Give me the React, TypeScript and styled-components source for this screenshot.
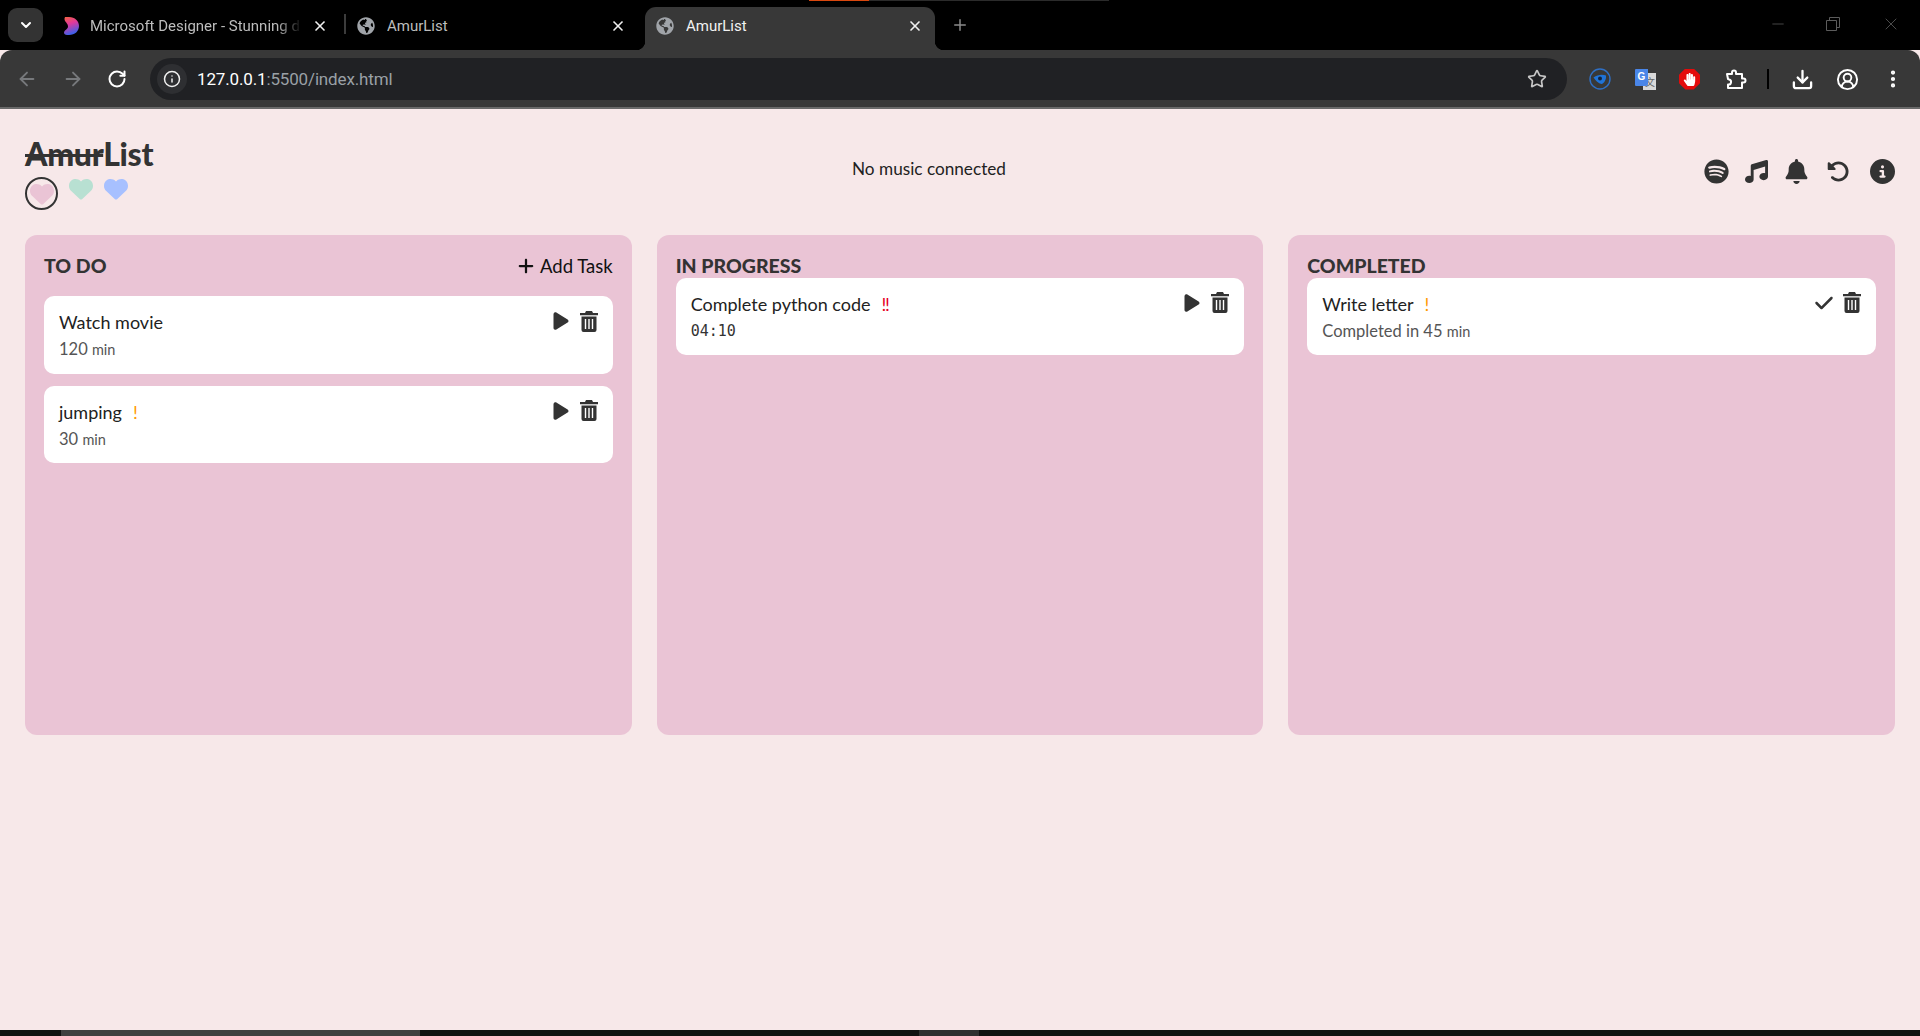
import React from "react";
import styled, { createGlobalStyle } from "styled-components";
import { ArrowLeft, ArrowRight, RotateCw, Info, Star, Download, CircleUserRound, EllipsisVertical, X, Plus, Minus, ChevronDown } from "lucide-react";
import { FaGlobeAmericas, FaHandPaper } from "react-icons/fa";
import { FaSpotify, FaMusic, FaBell, FaRotateLeft, FaCircleInfo, FaPlay, FaCheck, FaPlus, FaHeart } from "react-icons/fa6";

const Global = createGlobalStyle`
  html, body { margin: 0; padding: 0; background: #f7e8e9; }
  * { box-sizing: border-box; }
`;

const Shell = styled.div`
  height: 100vh; display: flex; flex-direction: column; overflow: hidden;
  font-family: "Lato", "Noto Sans", sans-serif; color: #333;
`;
const TabStrip = styled.div`
  position: relative; height: 50px; background: #000; display: flex; align-items: flex-end; padding-left: 8px; flex: none;
`;
const LoadLine = styled.div`
  position: absolute; top: 0; left: 809px; width: 300px; height: 1px; background: #2b2b2b;
  &::before { content: ""; display: block; width: 60px; height: 1px; background: #d9480f; }
`;
const TabSearch = styled.div`
  width: 35px; height: 34px; margin-bottom: 8px; border-radius: 9px; background: #333; color: #fff;
  display: flex; align-items: center; justify-content: center; flex: none;
`;
const Tab = styled.div<{ $w: number; $pl: number; $active?: boolean; $gap?: number; $pr?: number }>`
  position: relative; width: ${p => p.$w}px; height: 43px; flex: none;
  display: flex; align-items: flex-start; gap: ${p => p.$gap ?? 12}px; padding: 10px ${p => p.$pr ?? 19}px 0 ${p => p.$pl}px;
  background: ${p => (p.$active ? "#383838" : "transparent")}; border-radius: 11px 11px 0 0;
  font: 15px "Roboto", "Liberation Sans", sans-serif; color: ${p => (p.$active ? "#f2f2f2" : "#bdbdbd")};
`;
const TabSep = styled.span`
  position: absolute; left: 0; top: 7px; width: 2px; height: 20px; background: #3c3c3c;
`;
const FlareLeft = styled.span`
  position: absolute; left: -9px; bottom: 0; width: 9px; height: 9px; background: radial-gradient(circle at 0 0, transparent 9px, #383838 9.5px);
`;
const FlareRight = styled.span`
  position: absolute; right: -9px; bottom: 0; width: 9px; height: 9px; background: radial-gradient(circle at 100% 0, transparent 9px, #383838 9.5px);
`;
const TabTitle = styled.span<{ $fade?: boolean }>`
  flex: 1; min-width: 0; white-space: nowrap; overflow: hidden; line-height: 18px;
  ${p => p.$fade && "-webkit-mask-image: linear-gradient(90deg, #000 88%, transparent 100%); mask-image: linear-gradient(90deg, #000 88%, transparent 100%);"}
`;
const TabIcon = styled.span`
  display: flex; width: 18px; height: 18px; align-items: center; justify-content: center; color: #a0a4a9; flex: none;
`;
const TabClose = styled.span`
  display: flex; width: 16px; height: 18px; align-items: center; justify-content: center; color: #f0f0f0; flex: none;
`;
const NewTab = styled.span`
  margin-bottom: 16px; margin-left: 16px; display: flex; color: #8a8a8a;
`;
const WindowControls = styled.div`
  margin-left: auto; margin-bottom: 16px; display: flex; align-items: center; color: #5c5c5c;
`;
const WinBtn = styled.span<{ $ml: number }>`
  display: flex; margin-left: ${p => p.$ml}px;
`;
const Toolbar = styled.div`
  height: 59px; flex: none; background: #383838; border-bottom: 2px solid #696969; border-radius: 12px 12px 0 0;
  display: flex; align-items: center; padding: 1px 0 0;
`;
const NavBtn = styled.span<{ $ml: number; $dim?: boolean }>`
  display: flex; margin-left: ${p => p.$ml}px; color: ${p => (p.$dim ? "#77797c" : "#fff")}; flex: none;
`;
const Omnibox = styled.div`
  width: 1417px; height: 42px; margin-left: 23px; background: #202124; border-radius: 21px; flex: none;
  display: flex; align-items: center; padding: 0 20px 0 7px;
`;
const InfoChip = styled.span`
  width: 30px; height: 30px; border-radius: 50%; background: #2e2f32; color: #f0f0f0; display: flex; align-items: center; justify-content: center; flex: none;
`;
const Url = styled.div`
  margin-left: 10px; flex: 1; font: 17px "Roboto", "Liberation Sans", sans-serif; color: #9aa0a6; letter-spacing: -0.15px;
  b { font-weight: 400; color: #fff; }
`;
const ExtSlot = styled.span<{ $ml: number }>`
  display: flex; margin-left: ${p => p.$ml}px; flex: none; color: #fff;
`;
const ToolSep = styled.span`
  width: 2px; height: 20px; background: #000; margin-left: 20px; flex: none;
`;
const TranslateBox = styled.span`
  position: relative; width: 21px; height: 21px; display: block;
`;
const TranslateBlue = styled.span`
  position: absolute; left: 0; top: 0; width: 13px; height: 17px; background: #4a86e8; border-radius: 1px 0 2px 1px; color: #fff;
  font: bold 10px/15px "Liberation Sans", sans-serif; text-align: center; z-index: 1;
`;
const TranslateGrey = styled.span`
  position: absolute; right: 0; top: 4px; width: 13px; height: 17px; background: #d9d9d9; color: #666;
  font: 10px/17px "Noto Sans CJK SC", sans-serif; text-align: right; padding-right: 1px;
`;
const StopSign = styled.span`
  width: 21px; height: 21px; background: #e40b0b; color: #fff; display: flex; align-items: center; justify-content: center;
  clip-path: polygon(30% 0, 70% 0, 100% 30%, 100% 70%, 70% 100%, 30% 100%, 0 70%, 0 30%);
`;
const Page = styled.main`
  flex: 1; background: #f7e8e9; padding: 21px 25px 0;
  min-height: 0;
`;
const Header = styled.header`
  display: grid; grid-template-columns: 1fr auto 1fr; align-items: start; height: 105px;
`;
const Brand = styled.div`
  display: flex; flex-direction: column; align-items: flex-start;
`;
const Logo = styled.h1`
  margin: 0; font: 900 32px/47px "Lato", sans-serif; color: #333; letter-spacing: -0.3px;
  s { text-decoration-thickness: 3px; }
`;
const Hearts = styled.div`
  display: flex; align-items: flex-start; gap: 11px;
`;
const HeartBtn = styled.span<{ $c: string; $on?: boolean }>`
  width: ${p => (p.$on ? 33 : 24)}px; height: ${p => (p.$on ? 33 : 24)}px; border-radius: 50%; flex: none;
  border: ${p => (p.$on ? "2px solid #333" : "none")}; color: ${p => p.$c};
  display: flex; align-items: center; justify-content: center; margin-top: ${p => (p.$on ? 0 : 0)}px;
`;
const NowPlaying = styled.div`
  margin-top: 28px; font-size: 17.2px; line-height: 22px; color: #222; margin-left: -62px;
`;
const HeaderIcons = styled.div`
  justify-self: end; display: flex; align-items: center; margin-top: 29px; color: #333; height: 25px;
`;
const HeaderIcon = styled.span<{ $ml?: number }>`
  display: flex; margin-left: ${p => p.$ml ?? 0}px;
`;
const Board = styled.section`
  display: grid; grid-template-columns: repeat(3, 1fr); gap: 25px;
`;
const Column = styled.div`
  height: 500px; background: #eac4d5; border-radius: 12px; padding: 17px 19px 0; display: flex; flex-direction: column;
`;
const ColHead = styled.div<{ $tall?: boolean }>`
  display: flex; justify-content: space-between; align-items: flex-start; height: ${p => (p.$tall ? 44 : 25.5)}px; flex: none;
`;
const ColTitle = styled.h2`
  margin: 0; font: 900 19.5px/28px "Lato", sans-serif; color: #333;
`;
const AddTask = styled.button`
  border: 0; background: none; padding: 0; display: flex; align-items: center; gap: 5px; color: #111;
  font: 18.5px/28px "Lato", sans-serif;
`;
const Cards = styled.div`
  display: flex; flex-direction: column; gap: 12px;
`;
const Card = styled.article`
  height: 77.5px; background: #fff; border-radius: 10px; padding: 15px 14px 0 15px; display: flex; justify-content: space-between;
`;
const CardBody = styled.div`
  display: flex; flex-direction: column; gap: 5px;
`;
const CardTitle = styled.div`
  font-size: 18px; line-height: 23px; color: #222; display: flex; gap: 11px;
`;
const Priority = styled.span<{ $c: string }>`
  color: ${p => p.$c};
`;
const CardMeta = styled.div`
  font-size: 16.5px; line-height: 21px; color: #555;
  small { font-size: 14.5px; }
`;
const Timer = styled.div`
  font: 15px/21px "DejaVu Sans Mono", monospace; color: #333;
`;
const CardActions = styled.div`
  display: flex; gap: 8px; color: #333; height: 20px; align-items: center;
`;
const ScrollBar = styled.div`
  height: 6px; background: #111; flex: none; display: flex;
`;
const Thumb = styled.span<{ $ml: number; $w: number; $c: string }>`
  margin-left: ${p => p.$ml}px; width: ${p => p.$w}px; background: ${p => p.$c};
`;

const DesignerLogo = () => (
  <svg width="18" height="18" viewBox="0 0 18 18">
    <defs>
      <linearGradient id="dl" x1="0" y1="0" x2="0.3" y2="1">
        <stop offset="0" stopColor="#f5643f" />
        <stop offset="0.45" stopColor="#e0389c" />
        <stop offset="1" stopColor="#3f5fe8" />
      </linearGradient>
    </defs>
    <path d="M3 0h4c6 0 10 4 10 9s-4 9-10 9H5c-2 0-3-1-3-2.500C2 13 6 12.500 6 9.500 6 6 2.500 5 2.500 2 2.500 1 3 0 3 0z" fill="url(#dl)" />
  </svg>
);

const EyeExt = () => (
  <svg width="22" height="22" viewBox="0 0 22 22">
    <circle cx="11" cy="11" r="10" fill="none" stroke="#2f6fc4" strokeWidth="1.400" />
    <path d="M4.500 9.500c4-3 9-3.500 12.500-2 .5 4-2 8-4.500 8.500-3-.5-6-3.500-8-6.500z" fill="#1f73d8" />
    <circle cx="11" cy="10.500" r="2" fill="#12233d" />
  </svg>
);

const PuzzleExt = () => (
  <svg width="22" height="22" viewBox="0 0 22 22" fill="none" stroke="#fff" strokeWidth="2" strokeLinejoin="round">
    <path d="M2 6h5V4.500a2 2 0 0 1 4 0V6h6v4.500h1.500a2 2 0 0 1 0 4H17V20H3v-3.500a2.500 2.500 0 0 0 1-5 3 3 0 0 0-1-.5z" />
  </svg>
);

const TrashIcon = () => (
  <svg width="20" height="21" viewBox="0 0 20 21" fill="currentColor">
    <path d="M7 0h6l1 2h5v2.200H1V2h5z" />
    <path fillRule="evenodd" d="M2.500 5.500h15V19a2 2 0 0 1-2 2h-11a2 2 0 0 1-2-2zM5.800 8v10h1.400V8zM9.300 8v10h1.400V8zM12.800 8v10h1.400V8z" />
  </svg>
);

type CardData = { title: string; prio?: string; prioColor?: string; meta: React.ReactNode; done?: boolean };

const TaskCard = ({ title, prio, prioColor, meta, done }: CardData) => (
  <Card>
    <CardBody>
      <CardTitle>
        {title}
        {prio && <Priority $c={prioColor ?? "#f90"}>{prio}</Priority>}
      </CardTitle>
      {meta}
    </CardBody>
    <CardActions>
      {done ? <FaCheck size={20} /> : <FaPlay size={20} />}
      <TrashIcon />
    </CardActions>
  </Card>
);

export default function App() {
  return (
    <Shell>
      <Global />
      <TabStrip>
        <LoadLine />
        <TabSearch><ChevronDown size={16} strokeWidth={3} /></TabSearch>
        <Tab $w={301} $pl={19} $pr={16} $gap={10}>
          <TabIcon><DesignerLogo /></TabIcon>
          <TabTitle $fade>Microsoft Designer - Stunning d</TabTitle>
          <TabClose><X size={16} strokeWidth={2.5} /></TabClose>
        </Tab>
        <Tab $w={301} $pl={13}>
          <TabSep />
          <TabIcon><FaGlobeAmericas size={18} /></TabIcon>
          <TabTitle>AmurList</TabTitle>
          <TabClose><X size={16} strokeWidth={2.5} /></TabClose>
        </Tab>
        <Tab $w={290} $pl={11} $pr={12} $active>
          <FlareLeft />
          <FlareRight />
          <TabIcon><FaGlobeAmericas size={18} /></TabIcon>
          <TabTitle>AmurList</TabTitle>
          <TabClose><X size={16} strokeWidth={2.5} /></TabClose>
        </Tab>
        <NewTab><Plus size={18} /></NewTab>
        <WindowControls>
          <WinBtn $ml={0}><Minus size={18} strokeWidth={1} /></WinBtn>
          <WinBtn $ml={39}>
            <svg width="14" height="14" viewBox="0 0 14 14" fill="none" stroke="currentColor"><path d="M.5 3.500h10v10H.5zM3.500 3.500v-3h10v10h-3" /></svg>
          </WinBtn>
          <WinBtn $ml={41}><X size={20} strokeWidth={1} /></WinBtn>
          <WinBtn $ml={19} />
        </WindowControls>
      </TabStrip>
      <Toolbar>
        <NavBtn $ml={16} $dim><ArrowLeft size={22} /></NavBtn>
        <NavBtn $ml={24} $dim><ArrowRight size={22} /></NavBtn>
        <NavBtn $ml={23}><RotateCw size={20} strokeWidth={2.4} /></NavBtn>
        <Omnibox>
          <InfoChip><Info size={18} /></InfoChip>
          <Url><b>127.0.0.1</b>:5500/index.html</Url>
          <Star size={20} color="#c7c7c7" strokeWidth={2} />
        </Omnibox>
        <ExtSlot $ml={22}><EyeExt /></ExtSlot>
        <ExtSlot $ml={24}>
          <TranslateBox>
            <TranslateBlue>G</TranslateBlue>
            <TranslateGrey>文</TranslateGrey>
          </TranslateBox>
        </ExtSlot>
        <ExtSlot $ml={23}><StopSign><FaHandPaper size={13} /></StopSign></ExtSlot>
        <ExtSlot $ml={25}><PuzzleExt /></ExtSlot>
        <ToolSep />
        <ExtSlot $ml={22}><Download size={23} strokeWidth={2.4} /></ExtSlot>
        <ExtSlot $ml={22}><CircleUserRound size={23} strokeWidth={2} /></ExtSlot>
        <ExtSlot $ml={23}><EllipsisVertical size={22} strokeWidth={2.6} /></ExtSlot>
      </Toolbar>
      <Page>
        <Header>
          <Brand>
            <Logo><s>Amur</s>List</Logo>
            <Hearts>
              <HeartBtn $c="#eac4d5" $on><FaHeart size={24} /></HeartBtn>
              <HeartBtn $c="#b8e0d2"><FaHeart size={24} /></HeartBtn>
              <HeartBtn $c="#a7c0ff"><FaHeart size={24} /></HeartBtn>
            </Hearts>
          </Brand>
          <NowPlaying>No music connected</NowPlaying>
          <HeaderIcons>
            <HeaderIcon><FaSpotify size={25} /></HeaderIcon>
            <HeaderIcon $ml={16}><FaMusic size={23} /></HeaderIcon>
            <HeaderIcon $ml={16}><FaBell size={25} /></HeaderIcon>
            <HeaderIcon $ml={18}><FaRotateLeft size={23} /></HeaderIcon>
            <HeaderIcon $ml={20}><FaCircleInfo size={25} /></HeaderIcon>
          </HeaderIcons>
        </Header>
        <Board>
          <Column>
            <ColHead $tall>
              <ColTitle>TO DO</ColTitle>
              <AddTask><FaPlus size={18} />Add Task</AddTask>
            </ColHead>
            <Cards>
              <TaskCard title="Watch movie" meta={<CardMeta>120 <small>min</small></CardMeta>} />
              <TaskCard title="jumping" prio="!" meta={<CardMeta>30 <small>min</small></CardMeta>} />
            </Cards>
          </Column>
          <Column>
            <ColHead><ColTitle>IN PROGRESS</ColTitle></ColHead>
            <Cards>
              <TaskCard title="Complete python code" prio="‼" prioColor="#e6001f" meta={<Timer>04:10</Timer>} />
            </Cards>
          </Column>
          <Column>
            <ColHead><ColTitle>COMPLETED</ColTitle></ColHead>
            <Cards>
              <TaskCard done title="Write letter" prio="!" meta={<CardMeta>Completed in 45 <small>min</small></CardMeta>} />
            </Cards>
          </Column>
        </Board>
      </Page>
      <ScrollBar>
        <Thumb $ml={61} $w={359} $c="#3f3f3f" />
        <Thumb $ml={499} $w={60} $c="#303030" />
      </ScrollBar>
    </Shell>
  );
}
